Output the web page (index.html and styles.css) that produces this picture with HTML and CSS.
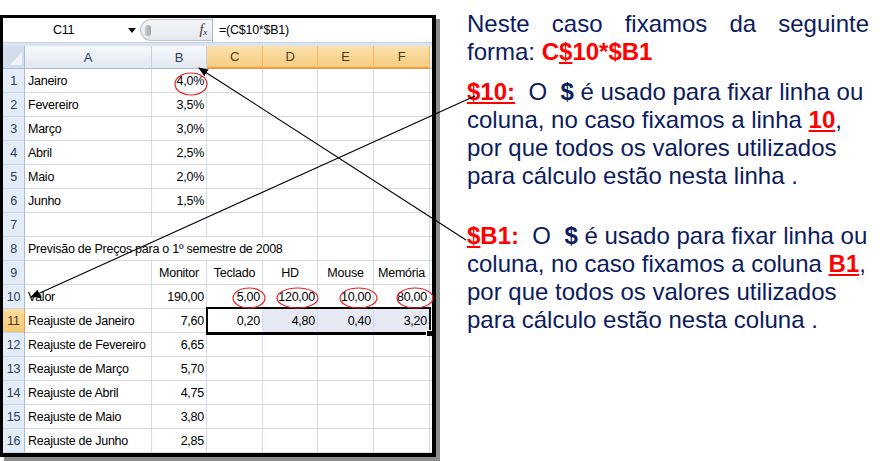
FILE: index.html
```html
<!DOCTYPE html>
<html lang="pt">
<head>
<meta charset="utf-8">
<title>Referência mista</title>
<link rel="stylesheet" href="styles.css">
</head>
<body>
<div class="page">
  <div class="sheet">
    <div class="fbar">
      <div class="namebox"><span class="nb-text">C11</span><svg class="nb-arrow" width="8" height="5" viewBox="0 0 8 5"><path d="M0 0H8L4 5Z" fill="#111"/></svg></div>
      <div class="pill"><span class="knob"></span><span class="fx">f<sub>x</sub></span></div>
      <div class="formula">=(C$10*$B1)</div>
    </div>
    <div class="band"></div>
    <div class="grid">
      <div class="corner"><svg width="22" height="23" viewBox="0 0 22 23"><path d="M19 6V19H7Z" fill="#f0f4f9"/></svg></div>
      <div class="ch">A</div><div class="ch">B</div><div class="ch sel">C</div><div class="ch sel">D</div><div class="ch sel">E</div><div class="ch sel">F</div><div class="ch"></div>

      <div class="rh">1</div><div class="c">Janeiro</div><div class="c n">4,0%</div><div class="c"></div><div class="c"></div><div class="c"></div><div class="c"></div><div class="c"></div>
      <div class="rh">2</div><div class="c">Fevereiro</div><div class="c n">3,5%</div><div class="c"></div><div class="c"></div><div class="c"></div><div class="c"></div><div class="c"></div>
      <div class="rh">3</div><div class="c">Março</div><div class="c n">3,0%</div><div class="c"></div><div class="c"></div><div class="c"></div><div class="c"></div><div class="c"></div>
      <div class="rh">4</div><div class="c">Abril</div><div class="c n">2,5%</div><div class="c"></div><div class="c"></div><div class="c"></div><div class="c"></div><div class="c"></div>
      <div class="rh">5</div><div class="c">Maio</div><div class="c n">2,0%</div><div class="c"></div><div class="c"></div><div class="c"></div><div class="c"></div><div class="c"></div>
      <div class="rh">6</div><div class="c">Junho</div><div class="c n">1,5%</div><div class="c"></div><div class="c"></div><div class="c"></div><div class="c"></div><div class="c"></div>
      <div class="rh">7</div><div class="c"></div><div class="c"></div><div class="c"></div><div class="c"></div><div class="c"></div><div class="c"></div><div class="c"></div>
      <div class="rh">8</div><div class="c span4">Previsão de Preços para o 1º semestre de 2008</div><div class="c"></div><div class="c"></div><div class="c"></div>
      <div class="rh">9</div><div class="c"></div><div class="c ctr">Monitor</div><div class="c ctr">Teclado</div><div class="c ctr">HD</div><div class="c ctr">Mouse</div><div class="c ctr">Memória</div><div class="c"></div>
      <div class="rh">10</div><div class="c">Valor</div><div class="c n">190,00</div><div class="c n">5,00</div><div class="c n">120,00</div><div class="c n">10,00</div><div class="c n">80,00</div><div class="c"></div>
      <div class="rh rsel">11</div><div class="c">Reajuste de Janeiro</div><div class="c n">7,60</div><div class="c n">0,20</div><div class="c n hl">4,80</div><div class="c n hl">0,40</div><div class="c n hl">3,20</div><div class="c"></div>
      <div class="rh">12</div><div class="c">Reajuste de Fevereiro</div><div class="c n">6,65</div><div class="c"></div><div class="c"></div><div class="c"></div><div class="c"></div><div class="c"></div>
      <div class="rh">13</div><div class="c">Reajuste de Março</div><div class="c n">5,70</div><div class="c"></div><div class="c"></div><div class="c"></div><div class="c"></div><div class="c"></div>
      <div class="rh">14</div><div class="c">Reajuste de Abril</div><div class="c n">4,75</div><div class="c"></div><div class="c"></div><div class="c"></div><div class="c"></div><div class="c"></div>
      <div class="rh">15</div><div class="c">Reajuste de Maio</div><div class="c n">3,80</div><div class="c"></div><div class="c"></div><div class="c"></div><div class="c"></div><div class="c"></div>
      <div class="rh">16</div><div class="c">Reajuste de Junho</div><div class="c n">2,85</div><div class="c"></div><div class="c"></div><div class="c"></div><div class="c"></div><div class="c"></div>

      <div class="selbox"><span class="handle"></span></div>
    </div>
  </div>

  <div class="notes">
    <p class="p1">Neste caso fixamos da seguinte forma: <b class="red">C<u>$</u>10*$B1</b></p>
    <p class="p2"><b class="red"><u>$10:</u></b>&nbsp; O&nbsp; <b>$</b> é usado para fixar linha ou coluna, no caso fixamos a linha <b class="red"><u>10</u></b>, por que todos os valores utilizados para cálculo estão nesta linha .</p>
    <p class="p3"><b class="red"><u>$</u>B1:</b>&nbsp; O&nbsp; <b>$</b> é usado para fixar linha ou coluna, no caso fixamos a coluna <b class="red"><u>B1</u></b>, por que todos os valores utilizados para cálculo estão nesta coluna .</p>
  </div>

  <svg class="overlay" width="887" height="461" viewBox="0 0 887 461">
    <defs>
      <marker id="ah" markerWidth="10" markerHeight="8" refX="9" refY="4" orient="auto" markerUnits="userSpaceOnUse">
        <path d="M0 0L10 4L0 8Z" fill="#000"/>
      </marker>
    </defs>
    <g fill="none" stroke="#e82323" stroke-width="1.2">
      <ellipse cx="191" cy="84" rx="16" ry="11"/>
      <ellipse cx="249" cy="298" rx="16" ry="10"/>
      <ellipse cx="297.5" cy="298" rx="20.5" ry="10"/>
      <ellipse cx="358.5" cy="298" rx="18.5" ry="10"/>
      <ellipse cx="415" cy="298" rx="18" ry="10"/>
    </g>
    <g stroke="#000" stroke-width="1.1">
      <line x1="466" y1="240" x2="199" y2="68" marker-end="url(#ah)"/>
      <line x1="475" y1="96" x2="31" y2="297" marker-end="url(#ah)"/>
    </g>
  </svg>
</div>
</body>
</html>
```

FILE: styles.css
```css
html, body {
  margin: 0;
  padding: 0;
  background: #fff;
}

.page {
  position: relative;
  width: 887px;
  height: 461px;
  display: flex;
  align-items: flex-start;
  overflow: hidden;
}

.sheet {
  margin-top: 15px;
  width: 429px;
  height: 435px;
  border: 3px solid #000;
  border-right-width: 4px;
  border-bottom-width: 4px;
  box-shadow: 4px 4px 0 #8c8c8c;
  background: #fff;
  overflow: hidden;
  display: flex;
  flex-direction: column;
  font-family: "Liberation Sans", Arial, sans-serif;
  font-size: 12.5px;
  letter-spacing: -0.25px;
  color: #000;
  flex-shrink: 0;
}

.fbar {
  height: 24px;
  display: flex;
  background: #fff;
}

.namebox {
  width: 137px;
  display: flex;
  align-items: center;
}

.nb-text {
  margin-left: 50px;
}

.nb-arrow {
  margin-left: auto;
  margin-right: 4px;
}

.pill {
  width: 72px;
  height: 22px;
  margin-top: 1px;
  border: 1px solid #b9c5d6;
  border-right: none;
  border-radius: 12px 0 0 12px;
  background: linear-gradient(#f4f6f9, #e4e8ee);
  display: flex;
  align-items: center;
  box-sizing: border-box;
}

.knob {
  width: 6px;
  height: 11px;
  margin-left: 4px;
  border-radius: 3px;
  background: linear-gradient(90deg, #c7cbd2, #9ea5b0);
}

.fx {
  margin-left: auto;
  margin-right: 5px;
  font-family: "Liberation Serif", serif;
  font-style: italic;
  font-size: 14px;
  color: #333;
}

.fx sub {
  font-size: 9px;
  vertical-align: -1px;
}

.formula {
  flex: 1;
  border-left: 1px solid #a9b6c7;
  padding-left: 6px;
  line-height: 24px;
}

.band {
  height: 5px;
  background: #dbe4ef;
  border-top: 1px solid #c3d0e0;
  box-sizing: border-box;
}

.grid {
  position: relative;
  display: grid;
  grid-template-columns: 22px 127px 55px 56px 55px 56px 56px 20px;
  grid-template-rows: 23px repeat(16, 24px);
}

.corner {
  background: #d3deec;
  border-right: 1px solid #a9bcd4;
  border-bottom: 1px solid #a9bcd4;
}

.corner svg {
  display: block;
}

.ch {
  background: linear-gradient(#f6f8fb, #e2e8f1);
  border-right: 1px solid #c5d1e0;
  border-bottom: 1px solid #a9bcd4;
  color: #27415f;
  text-align: center;
  line-height: 23px;
  font-size: 13px;
}

.ch.sel {
  background: linear-gradient(#fbe1ad, #f6cc80);
  border-right: 1px solid #f2b86a;
  border-bottom: 2px solid #f29c3d;
  line-height: 22px;
  color: #4a3a1e;
}

.rh {
  background: #e4ecf7;
  border-right: 1px solid #a9bcd4;
  border-bottom: 1px solid #c5d4e6;
  color: #27415f;
  text-align: center;
  line-height: 24px;
}

.rh.rsel {
  background: linear-gradient(#fbdd9f, #f6c874);
  border-right: 1px solid #f29c3d;
  color: #4a3a1e;
}

.c {
  border-right: 1px solid #d4dbe7;
  border-bottom: 1px solid #d4dbe7;
  padding: 0 3px;
  line-height: 24px;
  white-space: nowrap;
}

.c.n {
  text-align: right;
  padding-right: 2px;
}

.c.ctr {
  text-align: center;
  padding: 0;
}

.c.hl {
  background: #e6e9f2;
}

.c.span4 {
  grid-column: span 4;
}

.selbox {
  position: absolute;
  grid-row: 12 / 13;
  grid-column: 4 / 8;
  top: -2px;
  left: -1px;
  right: -1px;
  bottom: -2px;
  border: 2px solid #000;
  border-bottom-width: 3px;
  pointer-events: none;
}

.handle {
  position: absolute;
  right: -4px;
  bottom: -5px;
  width: 5px;
  height: 5px;
  background: #000;
  border: 1px solid #fff;
}

.notes {
  margin-left: 31px;
  margin-top: 10px;
  width: 402px;
  font-family: "Liberation Sans", Arial, sans-serif;
  font-size: 24px;
  line-height: 28px;
  color: #0c1b5e;
}

.notes p {
  margin: 0;
}

.notes .p1 {
  text-align: justify;
}

.notes .p2 {
  margin-top: 12px;
}

.notes .p3 {
  margin-top: 32px;
}

.red {
  color: #ff0000;
}

.overlay {
  position: absolute;
  left: 0;
  top: 0;
  pointer-events: none;
}
```
